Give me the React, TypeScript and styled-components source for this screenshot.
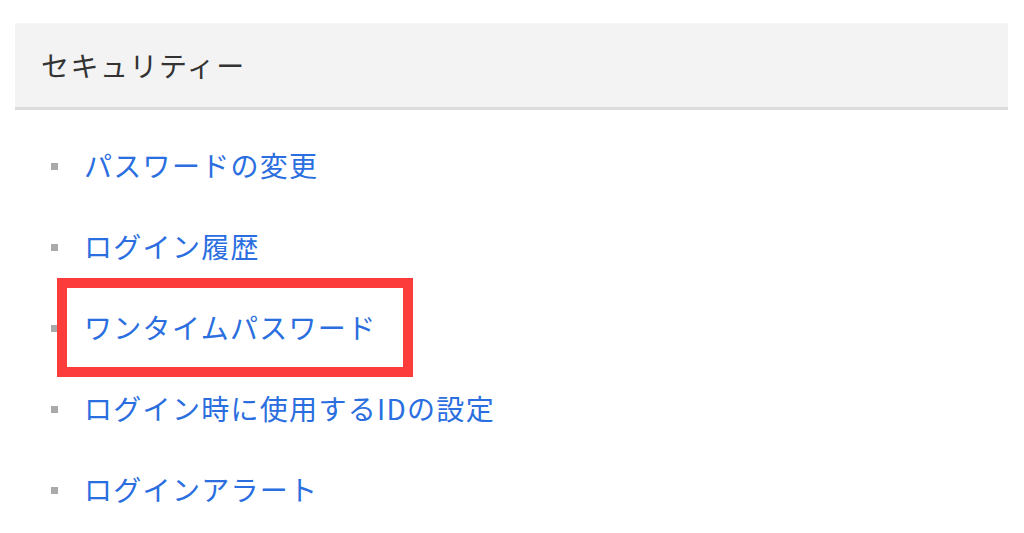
import React from "react";
import styled, { createGlobalStyle } from "styled-components";

const Global = createGlobalStyle`
  html, body { margin: 0; padding: 0; background: #fff; }
  body { font-family: "Noto Sans CJK JP", "Noto Sans", sans-serif; }
`;

const Page = styled.div`
  width: 1024px;
  height: 533px;
  padding: 23px 16px 0 15px;
  box-sizing: border-box;
  overflow: hidden;
`;

const Header = styled.div`
  height: 83px;
  background: #f3f3f3;
  border-top: 1px solid #f7f7f7;
  border-bottom: 3px solid #dcdcdc;
  display: flex;
  align-items: center;
  padding-left: 26px;
  box-sizing: content-box;
`;

const Title = styled.h2`
  margin: 0 0 2px;
  font-size: 28px;
  font-weight: 400;
  letter-spacing: 1.5px;
  color: #333;
  line-height: 1;
`;

const List = styled.ul`
  list-style: none;
  margin: 0;
  padding: 14px 0 0 36px;
`;

const Item = styled.li`
  position: relative;
  height: 81px;
  display: flex;
  align-items: center;
  gap: 26px;
`;

const Bullet = styled.span`
  width: 7px;
  height: 7px;
  background: #aaa;
  flex: none;
  margin-top: 3px;
`;

const Link = styled.a`
  font-size: 28px;
  letter-spacing: 1.3px;
  color: #2a6ee0;
  text-decoration: none;
  line-height: 1;
`;

const Highlight = styled.span`
  position: absolute;
  left: 6px;
  top: -8px;
  width: 356px;
  height: 99px;
  border: 10px solid #fc3b3b;
  box-sizing: border-box;
  pointer-events: none;
`;

const items = [
  "パスワードの変更",
  "ログイン履歴",
  "ワンタイムパスワード",
  "ログイン時に使用するIDの設定",
  "ログインアラート",
];

export default function App() {
  return (
    <>
      <Global />
      <Page>
        <Header>
          <Title>セキュリティー</Title>
        </Header>
        <List>
          {items.map((t, i) => (
            <Item key={t}>
              <Bullet />
              <Link href="#">{t}</Link>
              {i === 2 && <Highlight />}
            </Item>
          ))}
        </List>
      </Page>
    </>
  );
}
